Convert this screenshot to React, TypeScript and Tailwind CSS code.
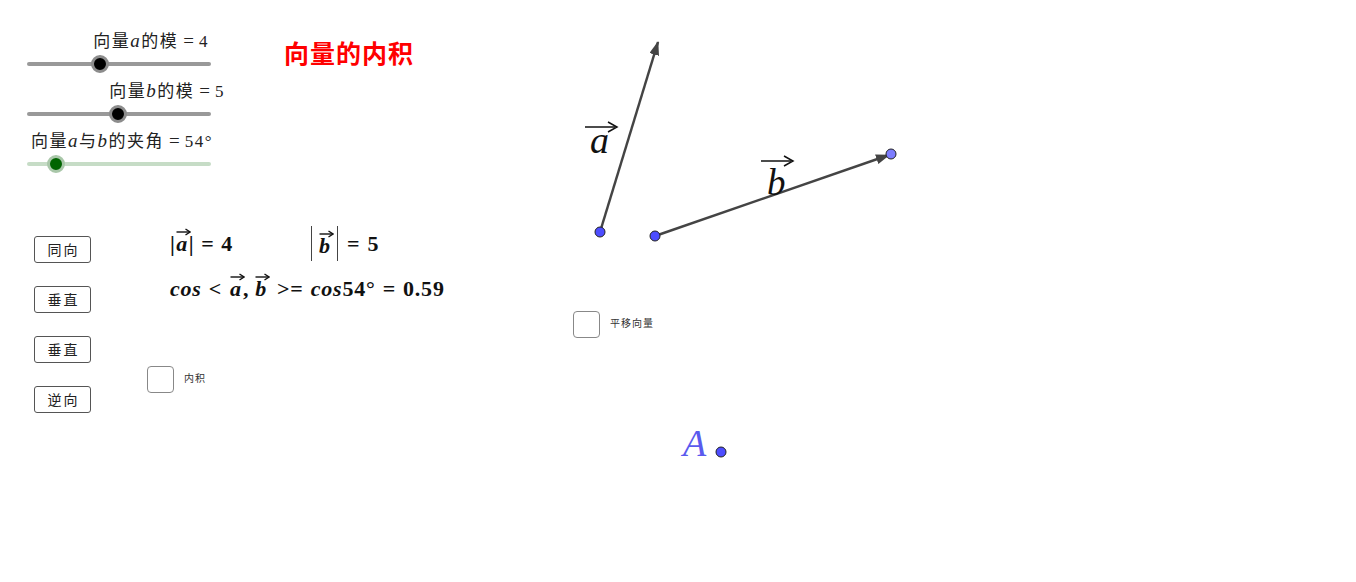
import React from 'react';

const serif = "font-['Liberation_Serif','Noto_Sans_CJK_SC',serif]";
const cjk = "font-['Noto_Sans_CJK_SC',sans-serif]";

function Slider({ label, labelShift, knobX, green }: { label: React.ReactNode; labelShift: number; knobX: number; green?: boolean }) {
  return (
    <div className="flex flex-col h-[50px]">
      <div className={`h-[26px] pb-[3px] flex justify-end items-center text-[17px] tracking-[1.5px] leading-none text-[#222] whitespace-nowrap ${serif}`} style={{ marginRight: -labelShift }}>
        {label}
      </div>
      <div className="relative h-[18px] flex items-center">
        <div className={`w-full h-[4px] rounded-full ${green ? 'bg-[#c6dcc6]' : 'bg-[#999999]'}`} />
        <div
          className={`absolute w-[18px] h-[18px] rounded-full border-[3px] ${green ? 'bg-[#006400] border-[#a9c7a9]' : 'bg-black border-[#8c8c8c]'}`}
          style={{ left: knobX - 9 }}
        />
      </div>
    </div>
  );
}

function Btn({ text }: { text: string }) {
  return (
    <div className={`w-[57px] h-[27px] rounded-[3px] border border-[#555] bg-white flex items-center justify-center text-[14px] tracking-[2px] pl-[2px] text-[#222] ${cjk}`}>
      {text}
    </div>
  );
}

function Vec({ v }: { v: string }) {
  return (
    <span className="relative inline-block px-[1px]">
      <svg className="absolute left-[1px] -top-[5px]" width="15" height="8" viewBox="0 0 15 8">
        <line x1="0.5" y1="4" x2="13.5" y2="4" stroke="#111" strokeWidth="1.4" />
        <path d="M9.5,1 L14,4 L9.5,7" fill="none" stroke="#111" strokeWidth="1.4" />
      </svg>
      <i>{v}</i>
    </span>
  );
}

const Eq = ({ c = '=' }: { c?: string }) => <span className="mx-[7px]">{c}</span>;
const LEq = () => <span className="mx-[5px] text-[19px] tracking-normal">=</span>;

function Checkbox({ label }: { label: string }) {
  return (
    <div className="flex items-center gap-[10px]">
      <div className="w-[27px] h-[27px] rounded-[4px] border border-[#888]" />
      <span className={`text-[10px] leading-none text-[#333] tracking-[1px] -mt-[3px] ${cjk}`}>{label}</span>
    </div>
  );
}

export default function App() {
  return (
    <div className="relative w-[1356px] h-[582px] bg-white overflow-hidden">
      {/* sliders */}
      <div className="absolute left-[27px] top-[29px] w-[184px] flex flex-col">
        <Slider label={<span>向量<i className="text-[19px]">a</i>的模<LEq />4</span>} labelShift={-2} knobX={73} />
        <Slider label={<span>向量<i className="text-[19px]">b</i>的模<LEq />5</span>} labelShift={14} knobX={91} />
        <Slider label={<span>向量<i className="text-[19px]">a</i>与<i className="text-[19px]">b</i>的夹角<LEq />54°</span>} labelShift={2} knobX={29} green />
      </div>

      <div className={`absolute left-[284px] top-[40px] text-[25px] leading-none font-bold text-[#ff0000] tracking-[1px] ${cjk}`}>
        向量的内积
      </div>

      {/* buttons */}
      <div className="absolute left-[34px] top-[236px] flex flex-col gap-[23px]">
        <Btn text="同向" />
        <Btn text="垂直" />
        <Btn text="垂直" />
        <Btn text="逆向" />
      </div>

      {/* formulas */}
      <div className={`absolute left-[170px] top-[226px] flex flex-col gap-[17px] text-[22px] font-bold leading-none whitespace-nowrap text-[#111] ${serif}`}>
        <div className="flex items-center h-[35px]">
          <span className="w-[141px] tracking-[0.5px]">|<Vec v="a" />|<Eq />4</span>
          <span className="inline-flex items-center h-[35px] border-l border-r border-[#444] px-[6px] pt-[4px]"><Vec v="b" /></span>
          <span className="ml-[9px] mr-[8px]">=</span>5
        </div>
        <div className="tracking-[0.8px]">
          <i>cos</i><Eq c="<" /><Vec v="a" />,<span className="ml-[5px]" /><Vec v="b" /><span className="ml-[9px] mr-[7px]">&gt;=</span><i>cos</i>54°<Eq />0.59
        </div>
      </div>

      <div className="absolute left-[147px] top-[366px]">
        <Checkbox label="内积" />
      </div>
      <div className="absolute left-[573px] top-[311px]">
        <Checkbox label="平移向量" />
      </div>

      <svg className="absolute left-0 top-0" width="1356" height="582">
        <defs>
          <marker id="ah2" markerWidth="14" markerHeight="10" refX="13" refY="5" orient="auto" markerUnits="userSpaceOnUse">
            <path d="M0,0 L14,5 L0,10 Z" fill="#444" />
          </marker>
        </defs>
        <line x1="600" y1="232" x2="658" y2="42" stroke="#444" strokeWidth="2.5" markerEnd="url(#ah2)" />
        <line x1="655" y1="236" x2="889" y2="155" stroke="#444" strokeWidth="2.5" markerEnd="url(#ah2)" />
        <circle cx="600" cy="232" r="5" fill="#4d4dff" stroke="#222" strokeWidth="1" />
        <circle cx="655" cy="236" r="5" fill="#4d4dff" stroke="#222" strokeWidth="1" />
        <circle cx="891" cy="154" r="5" fill="#7d7dff" stroke="#222" strokeWidth="1" />
        <circle cx="721" cy="452" r="5" fill="#4d4dff" stroke="#222" strokeWidth="1" />
        <line x1="585" y1="127" x2="615" y2="127" stroke="#111" strokeWidth="1.5" />
        <path d="M608,122 L617,127 L608,132" fill="none" stroke="#111" strokeWidth="1.5" />
        <line x1="761" y1="161" x2="791" y2="161" stroke="#111" strokeWidth="1.5" />
        <path d="M784,156 L793,161 L784,166" fill="none" stroke="#111" strokeWidth="1.5" />
      </svg>

      <div className={`absolute left-[590px] top-[121px] text-[38px] italic leading-none text-[#111] ${serif}`}>a</div>
      <div className={`absolute left-[767px] top-[164px] text-[37px] italic leading-none text-[#111] ${serif}`}>b</div>
      <div className={`absolute left-[683px] top-[424px] text-[38px] italic leading-none text-[#5a5aee] ${serif}`}>A</div>
    </div>
  );
}
